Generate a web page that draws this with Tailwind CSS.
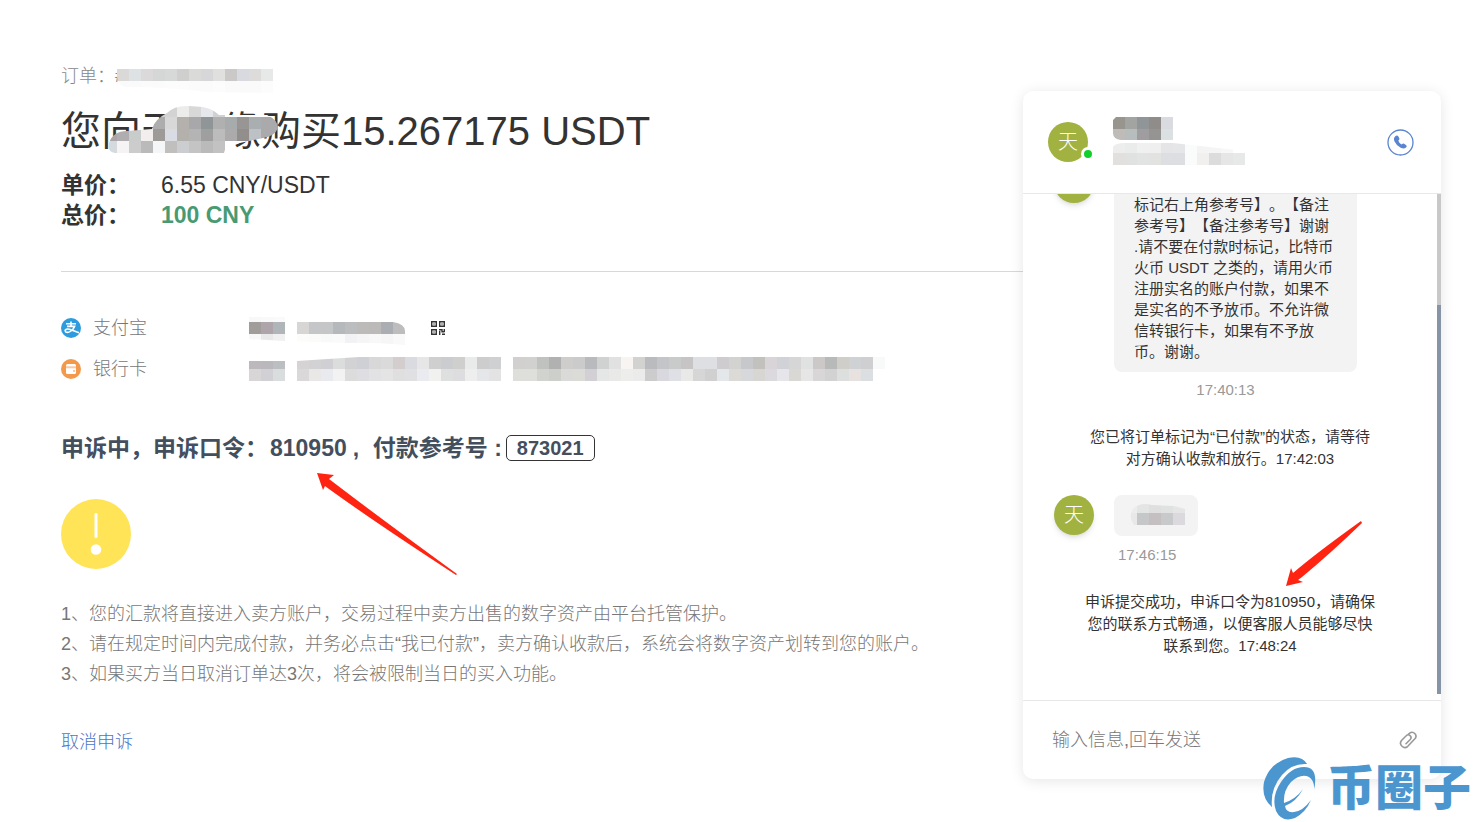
<!DOCTYPE html>
<html lang="zh-CN">
<head>
  <meta charset="UTF-8" />
  <meta name="viewport" content="width=device-width, initial-scale=1" />
  <title>订单申诉</title>
  <script src="https://cdn.jsdelivr.net/npm/@tailwindcss/browser@4"></script>
</head>

<body class="bg-white text-[#333] min-h-screen relative overflow-x-hidden font-['Liberation_Sans','Noto_Sans_CJK_SC',sans-serif] [text-spacing-trim:space-all]">

  <div class="flex items-start">

    <!-- Order -->
    <main class="flex-1 min-w-0 pl-[61px] pt-[61px] pb-10">

      <p class="relative text-lg leading-[30px] font-light text-[#888]">
        订单：#
        <svg class="absolute left-14 top-2" width="160" height="28" data-rows="dbd8d8,dde2e5,dbd9d9,d5d6d6,d7d9d9,cfcfcd,dadbd9,d7d7d9,e0e1df,cbc9c7,d8dadf,dddcdb,e7e9e8|fafafa,fafafa,fbfbfb,fbfbfb,fcfcfc,fcfcfc,fbfbfb,fbfbfb,fcfcfc,fafafa,fafafa,fafafa,fcfcfc" data-clip="M0 0H156V24L90 23Q50 18 10 18Q2 18 0 8Z"></svg>
      </p>

      <h1 class="relative mt-[7px] text-[40px] leading-[66px] whitespace-nowrap">
        您向天<span class="inline-block w-10"></span>缘购买15.267175 USDT
        <svg class="absolute left-11 top-[7px]" width="180" height="50" data-rows="ffffff,ffffff,ffffff,ffffff,d0d0d0,d3d3d3,ececeb,d8d8d8,e6e7ea,d0d1d2,ffffff,ffffff,ffffff,ffffff,ffffff|ffffff,ffffff,ffffff,ffffff,adadae,d8d8d8,b4b0ab,a8a8aa,909597,b0b0b0,a7abac,989694,a9aeb1,aaaaac,aaaaac|aaa5a9,b0adb0,c8cccb,f1eeed,9d9a98,d9dce2,b4b0ab,b4b4b5,9f9f9f,bcbcbc,acaaaa,918e8c,bdc1c6,aaaaac,aaaaac|d5dade,f5f3f3,cccccc,bababa,f4f6f7,c0bfbe,cbcdd1,c4c4c4,bababa,c2c2c2,ffffff,ffffff,ffffff,ffffff,ffffff" data-clip="M10 48Q2 47 4 38Q8 26 22 26L47 24Q50 14 62 8Q70 0 84 1L98 2Q108 4 114 10L162 10Q173 15 173 23Q170 31 158 33L121 41L119 48Z"></svg>
      </h1>

      <dl class="mt-[6px] text-[23px] leading-[30px]">
        <div class="flex">
          <dt class="w-[100px] font-bold">单价：</dt>
          <dd>6.55 CNY/USDT</dd>
        </div>
        <div class="flex">
          <dt class="w-[100px] font-bold">总价：</dt>
          <dd class="font-bold text-[#489a73]">100 CNY</dd>
        </div>
      </dl>

      <hr class="mt-[41px] border-[#d8d8d8]" />

      <ul class="mt-[35px] text-lg font-light text-[#777]">
        <li class="flex items-center h-[41px]">
          <svg class="w-5 h-5 mr-3" viewBox="0 0 20 20" fill="none">
            <circle cx="10" cy="10" r="10" fill="#2e9bdc" />
            <path d="M5 5.8h10M10 3.4v5M6 8.4h7.6q-1.4 3.6-4.2 5-2.6 1.6-4.6.6-1.6-1.6.6-2.8 2-.6 4.6.6l8 3" stroke="#fff" stroke-width="1.6" />
          </svg>
          <span class="w-[156px]">支付宝</span>
          <svg class="mr-[22px]" width="160" height="38" data-rows="f8f8f8,f9f9f9,fafafa,ffffff,ffffff,ffffff,ffffff,ffffff,ffffff,ffffff,ffffff,ffffff,ffffff|a19d9b,aea5ab,b0b5b9,ffffff,d8d5d5,c5c6c8,c5c6c8,b6b9bc,bcbdbf,bdbbba,bcbab8,aaaeb2,bdbdbd|f8f8f8,e9e9e9,f0f0f0,ffffff,fcfcfb,fbfbfa,f8f9f9,fafafa,f2f2f4,f5f5f5,f8f8f8,f6f6f6,f9f9f9" data-lift="-1" data-clip="M0 8H36V13H144Q156 15 156 22V36Q120 33 100 34L36 32L0 30Z"></svg>
          <button type="button" aria-label="二维码">
            <svg class="w-[14px] h-[14px]" viewBox="0 0 14 14" fill="none" stroke="#333" stroke-width="1.4">
              <path d="M.7.7h4.6v4.6H.7zM8.7.7h4.6v4.6H8.7zM.7 8.7h4.6v4.6H.7z" />
              <path d="M2.5 3h1M10.5 3h1M2.5 11h1M8 8.7h3v2h2.500M13.300 8v3M8.700 10v4M11 13.300h3" />
            </svg>
          </button>
        </li>
        <li class="flex items-center h-[41px]">
          <svg class="w-5 h-5 mr-3" viewBox="0 0 20 20">
            <circle cx="10" cy="10" r="10" fill="#f3994b" />
            <rect x="5" y="5" width="10" height="10" rx="1.500" fill="#fff" />
            <path d="M5 7.300h10v2H5z" fill="#f9c9a0" />
            <path d="M12 11.500h2v1h-2z" fill="#f3994b" />
          </svg>
          <span class="w-[156px]">银行卡</span>
          <svg width="640" height="24" data-rows="bdb8bb,bbb8bd,bcbfc1,ffffff,d5d3d3,d2d1d3,cfcfd4,dbdcdc,d2d2d5,ced0d5,d8d8d8,dadadb,d3cecd,dadbe0,e6e6e6,d0cfd0,cbccd0,cfcfce,e8ebea,cdcdce,cfd0d2,ffffff,d1d0ce,d1d1cf,c0c2bf,b1b1b1,cfcdcc,cbcbcb,b8babd,d0d2d2,e1e1e1,f7f4f2,d2d2d0,babbbe,c4c5c9,c9cbca,c7c4c6,dedfe2,dedfe2,cfcccf,d2d2d0,c7c8cc,c3c1be,d8d4d7,d1d2d8,d6d6d6,dfe2e1,cbc8c7,b7bab9,d0cec9,ced2d4,cfcfd2,f8fafa|d9d6d7,d1d0d5,d9dddd,ffffff,dad8d8,e9e8e7,e8eaef,f2f2f3,dcdcdd,dedee2,e2e2e4,e4e4e4,dfdfdf,e0e0e3,e9ebf0,f1f1ef,dedfdf,dddddf,eeeeee,e5e6e9,e3e3e3,ffffff,dedfdb,dedfdb,d1d3cf,cdcfca,dadad9,dbdbd8,d2d0d4,e4e7e6,e9e9e8,ededec,ebebeb,cccccc,d9d8df,dfe0e5,e9e9e7,d6d6d6,d0d0d0,e4e7e9,dbdad6,d6d8dc,d8d6d3,dbd9de,e5e5ea,d9d8d4,e6e6e6,d9d6d8,d2d2d2,dcdfde,e7e2e0,dbdfe2,ffffff" data-clip="M0 4H36L48 4L110 0H640V24H0Z"></svg>
        </li>
      </ul>

      <h2 class="mt-[44px] flex items-center text-[23px] leading-[30px] font-bold text-[#444f5e] whitespace-nowrap">
        <span>申诉中，申诉口令：</span>
        <span class="ml-[2px]">810950</span>
        <span class="w-[26px] pl-[6px]">,</span>
        <span>付款参考号 :</span>
        <span class="ml-1 px-[10px] border border-[#333] rounded-[5px] text-xl leading-6">873021</span>
      </h2>

      <svg class="mt-9 w-[70px] h-[70px]" viewBox="0 0 70 70">
        <circle cx="35" cy="35" r="35" fill="#ffe457" />
        <path d="M35 15.500v22" stroke="#fff" stroke-width="3" stroke-linecap="round" />
        <circle cx="35" cy="50.500" r="5.300" fill="#fff" />
      </svg>

      <div class="mt-[30px] text-lg leading-[30px] font-light text-[#777] whitespace-nowrap">
        <p>1、您的汇款将直接进入卖方账户，交易过程中卖方出售的数字资产由平台托管保护。</p>
        <p>2、请在规定时间内完成付款，并务必点击“我已付款”，卖方确认收款后，系统会将数字资产划转到您的账户。</p>
        <p>3、如果买方当日取消订单达3次，将会被限制当日的买入功能。</p>
      </div>

      <a href="#" class="mt-[38px] inline-block text-lg leading-[30px] font-light text-[#4a76c8]">取消申诉</a>
    </main>

    <!-- Chat -->
    <aside class="w-[418px] shrink-0 mt-[91px] mr-8 rounded-[10px] bg-white shadow-[0_2px_14px_rgba(0,0,0,0.1)]">

      <header class="flex items-center h-[103px] pl-[25px] pr-[27px] border-b border-[#e8e8e8]">
        <div class="relative w-10 h-10 rounded-full bg-[#a2b241] text-white text-xl leading-10 text-center font-light">
          天
          <span class="absolute -right-[7px] bottom-[1px] w-[14px] h-[14px] rounded-full border-3 border-white bg-[#12d02c]"></span>
        </div>
        <svg class="ml-[25px]" width="132" height="50" data-rows="98958f,a1a4a0,909597,8f8c8a,dadbe0|bebbb9,b7bdbc,a09da0,969492,dbe0e3|ededee,e9eceb,f0f0f1,efeff0,e5e5e8,e4e6e8,fafcfc,f4f4f4,f5f5f5,f7f7f7,ffffff|e1e0df,dfe2e1,e2e3e3,e2e2e1,dcdee2,dddee1,fafcfc,f1f0ee,dcdcdc,e6e6e6,e7e9e9" data-clip="M3 0H60V23H8Q0 22 0 16V3ZM0 30Q2 26 12 26H60L132 34V48H0Z"></svg>
        <button type="button" class="ml-auto" aria-label="电话">
          <svg class="w-[27px] h-[27px]" viewBox="0 0 27 27">
            <circle cx="13.500" cy="13.500" r="12.500" fill="#fff" stroke="#5b84d0" stroke-width="1.300" />
            <path d="M8.300 7.200q1.900-1.500 3.100.3l1 2q.4 1-1.100 2.200.7 2.200 3.200 3.700 1.700-1.200 2.600-.6l2.200 1.500q1.200 1.200-.6 2.500-2 1.400-5-.1-4.500-2.300-6.400-6.700-1-3.200 1-4.800z" fill="#5b84d0" />
          </svg>
        </button>
      </header>

      <div class="flex h-[506px] overflow-hidden">
        <div class="flex-1 flex flex-col justify-end gap-[25px] pb-[43px] text-[15px] leading-[22px]">

          <div class="flex items-start pl-[31px]">
            <div class="w-10 h-10 shrink-0 rounded-full bg-[#a2b241] shadow-md"></div>
            <div class="ml-5 w-[243px]">
              <p class="pt-[31px] pb-[10px] px-5 rounded-lg bg-[#f3f3f3] leading-[21px] whitespace-nowrap">标记右上角参考号】。【备注<br />参考号】【备注参考号】谢谢<br />.请不要在付款时标记，比特币<br />火币 USDT 之类的，请用火币<br />注册实名的账户付款，如果不<br />是实名的不予放币。不允许微<br />信转银行卡，如果有不予放<br />币。谢谢。</p>
              <time class="block mt-[7px] pr-5 text-center text-[#999]">17:40:13</time>
            </div>
          </div>

          <p class="text-center">您已将订单标记为“已付款”的状态，请等待<br />对方确认收款和放行。17:42:03</p>

          <div class="flex items-start pl-[31px]">
            <div class="w-10 h-10 rounded-full bg-[#a2b241] shadow-md text-white text-xl leading-10 text-center font-light">天</div>
            <div class="ml-5">
              <div class="w-[84px] h-[41px] pt-2 pl-4 rounded-lg bg-[#f3f3f3]">
                <svg width="60" height="24" data-rows="ececec,e2e5e4,dfdfdf,e0e2e2,e5e5e5|e8e8e8,c6c7c9,c6bfc2,c7c9ca,dbd9dd" data-shift="-5" data-lift="2" data-clip="M4 22Q-2 14 3 6Q10 -1 22 2L44 3L55 6V22Z"></svg>
              </div>
              <time class="block mt-2 pl-1 text-[#999]">17:46:15</time>
            </div>
          </div>

          <p class="text-center">申诉提交成功，申诉口令为810950，请确保<br />您的联系方式畅通，以便客服人员能够尽快<br />联系到您。17:48:24</p>
        </div>

        <!-- scroll track -->
        <div class="w-1 mb-[6px] pt-[111px] bg-[#c8c8c8]">
          <div class="h-full bg-[#8694a5]"></div>
        </div>
      </div>

      <form class="flex items-center h-[79px] pl-[29px] pr-6 border-t border-[#e8e8e8]">
        <input type="text" aria-label="输入信息" placeholder="输入信息,回车发送" class="flex-1 min-w-0 text-lg font-light outline-none placeholder:text-[#777]" />
        <button type="button" aria-label="附件">
          <svg class="w-[18px] h-[18px]" viewBox="0 0 18 18" fill="none" stroke="#999" stroke-width="1.600" stroke-linecap="round">
            <path d="M9.500 3.200l1.200-1.100a3.900 3.900 0 0 1 5.400 5.500l-7.300 7.700a4.300 4.300 0 0 1-6.300-5.800l4.700-4.700a2.700 2.700 0 0 1 4 3.700l-4.200 4.200" />
          </svg>
        </button>
      </form>
    </aside>
  </div>

  <!-- Arrows pointing at the appeal code -->
  <svg class="absolute left-[316px] top-[473px] pointer-events-none" width="142" height="104" viewBox="0 0 142 104">
    <path d="M1 0L18 2L13 6L17 9Q60 42 141 101L140 102Q60 50 13 16L9 13L7 17Z" fill="#ff2412" />
  </svg>
  <svg class="absolute left-[1285px] top-[520px] pointer-events-none" width="80" height="68" viewBox="0 0 80 68">
    <path d="M1 66L6 48L8 53Q30 34 76 1L77 3Q46 33 17 57L13 60L18 62Z" fill="#ff2412" />
  </svg>

  <!-- Watermark -->
  <div class="absolute left-[1263px] top-[757px] flex items-center text-[#4c96d0]">
    <svg class="w-[54px] h-[64px]" viewBox="0 0 54 64" fill="#4c96d0">
      <path d="M9 50Q-2 41 1 25Q7 6 25 1Q39-2 44 7Q29 6 19 18Q7 32 9 50Z" />
      <path d="M51 33Q56 10 41 10Q28 10 18 25Q8 40 13 54Q19 66 32 61Q43 55 48 43Q40 54 31 55Q23 56 22 49Q33 45 40 32Q33 42 21 46Q20 34 28 25Q38 16 46 20Q52 24 51 33Z" />
    </svg>
    <span class="ml-[10px] text-[48px] leading-[64px] font-black whitespace-nowrap">币圈子</span>
  </div>

  <script>
    // Fills each masked area with 12px blocks
    const NS = 'http://www.w3.org/2000/svg';
    const SIZE = 12;

    document.querySelectorAll('svg[data-rows]').forEach((svg, n) => {
      const clip = document.createElementNS(NS, 'clipPath');
      clip.id = 'mask' + n;
      const shape = document.createElementNS(NS, 'path');
      shape.setAttribute('d', svg.dataset.clip);
      clip.appendChild(shape);
      svg.appendChild(clip);

      const group = document.createElementNS(NS, 'g');
      group.setAttribute('clip-path', 'url(#mask' + n + ')');
      svg.appendChild(group);

      svg.dataset.rows.split('|').forEach((row, y) => {
        row.split(',').forEach((color, x) => {
          const block = document.createElementNS(NS, 'rect');
          block.setAttribute('x', x * SIZE + Number(svg.dataset.shift || 0));
          block.setAttribute('y', y * SIZE - Number(svg.dataset.lift || 0));
          block.setAttribute('width', SIZE);
          block.setAttribute('height', SIZE);
          block.setAttribute('fill', '#' + color);
          group.appendChild(block);
        });
      });
    });
  </script>
</body>
</html>
